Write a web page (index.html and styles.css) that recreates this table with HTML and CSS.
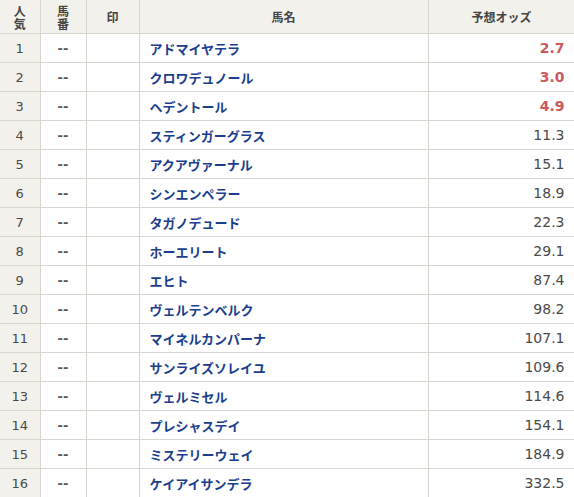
FILE: index.html
```html
<!DOCTYPE html>
<html lang="ja">
<head>
    <meta charset="UTF-8">
    <meta name="viewport" content="width=device-width, initial-scale=1.0">
    <title>予想オッズ</title>
    <link rel="stylesheet" href="styles.css">
</head>
<body>
    <table class="odds">
        <colgroup>
            <col class="c-rank">
            <col class="c-num">
            <col class="c-mark">
            <col class="c-name">
            <col class="c-odd">
        </colgroup>
        <thead>
            <tr>
                <th class="rank">人気</th>
                <th class="num">馬番</th>
                <th class="mark">印</th>
                <th class="name">馬名</th>
                <th class="odd">予想オッズ</th>
            </tr>
        </thead>
        <tbody>
            <tr><td class="rank">1</td><td class="num">--</td><td></td><td class="name">アドマイヤテラ</td><td class="odd fav">2.7</td></tr>
            <tr><td class="rank">2</td><td class="num">--</td><td></td><td class="name">クロワデュノール</td><td class="odd fav">3.0</td></tr>
            <tr><td class="rank">3</td><td class="num">--</td><td></td><td class="name">ヘデントール</td><td class="odd fav">4.9</td></tr>
            <tr><td class="rank">4</td><td class="num">--</td><td></td><td class="name">スティンガーグラス</td><td class="odd">11.3</td></tr>
            <tr><td class="rank">5</td><td class="num">--</td><td></td><td class="name">アクアヴァーナル</td><td class="odd">15.1</td></tr>
            <tr><td class="rank">6</td><td class="num">--</td><td></td><td class="name">シンエンペラー</td><td class="odd">18.9</td></tr>
            <tr><td class="rank">7</td><td class="num">--</td><td></td><td class="name">タガノデュード</td><td class="odd">22.3</td></tr>
            <tr><td class="rank">8</td><td class="num">--</td><td></td><td class="name">ホーエリート</td><td class="odd">29.1</td></tr>
            <tr><td class="rank">9</td><td class="num">--</td><td></td><td class="name">エヒト</td><td class="odd">87.4</td></tr>
            <tr><td class="rank">10</td><td class="num">--</td><td></td><td class="name">ヴェルテンベルク</td><td class="odd">98.2</td></tr>
            <tr><td class="rank">11</td><td class="num">--</td><td></td><td class="name">マイネルカンパーナ</td><td class="odd">107.1</td></tr>
            <tr><td class="rank">12</td><td class="num">--</td><td></td><td class="name">サンライズソレイユ</td><td class="odd">109.6</td></tr>
            <tr><td class="rank">13</td><td class="num">--</td><td></td><td class="name">ヴェルミセル</td><td class="odd">114.6</td></tr>
            <tr><td class="rank">14</td><td class="num">--</td><td></td><td class="name">プレシャスデイ</td><td class="odd">154.1</td></tr>
            <tr><td class="rank">15</td><td class="num">--</td><td></td><td class="name">ミステリーウェイ</td><td class="odd">184.9</td></tr>
            <tr><td class="rank">16</td><td class="num">--</td><td></td><td class="name">ケイアイサンデラ</td><td class="odd">332.5</td></tr>
        </tbody>
    </table>
</body>
</html>
```

FILE: styles.css
```css
body {
    margin: 0;
    background-color: #ffffff;
    font-family: 'DejaVu Sans', 'Noto Sans CJK JP', sans-serif;
    font-size: 13px;
    color: #4a4a4a;
}

.odds {
    width: 575px;
    border-collapse: collapse;
    table-layout: fixed;
}

.c-rank { width: 40px; }
.c-num { width: 46px; }
.c-mark { width: 53px; }
.c-name { width: 289px; }
.c-odd { width: 147px; }

.odds th,
.odds td {
    border: 1px solid #d9d6cf;
    padding: 0 10px;
    height: 28px;
}

.odds th:first-child,
.odds td:first-child {
    border-left: none;
}

.odds th {
    border-top: none;
    height: 33px;
    background-color: #f3f1ec;
    font-family: 'Noto Sans CJK JP', sans-serif;
    font-weight: bold;
    font-size: 12px;
    color: #444444;
    line-height: 13px;
    white-space: nowrap;
}

.odds th.rank,
.odds th.num {
    padding: 0 12px;
    white-space: normal;
}

.rank {
    text-align: center;
}

td.rank {
    background-color: #f3f1ec;
    padding: 0;
}

.num {
    text-align: center;
    font-weight: bold;
    color: #555555;
}

td.name {
    font-family: 'Noto Sans CJK JP', sans-serif;
    font-weight: bold;
    color: #1b3e8f;
    text-align: left;
}

td.odd {
    text-align: right;
    font-size: 14px;
}

.fav {
    color: #c95a5f;
    font-weight: bold;
}
```
